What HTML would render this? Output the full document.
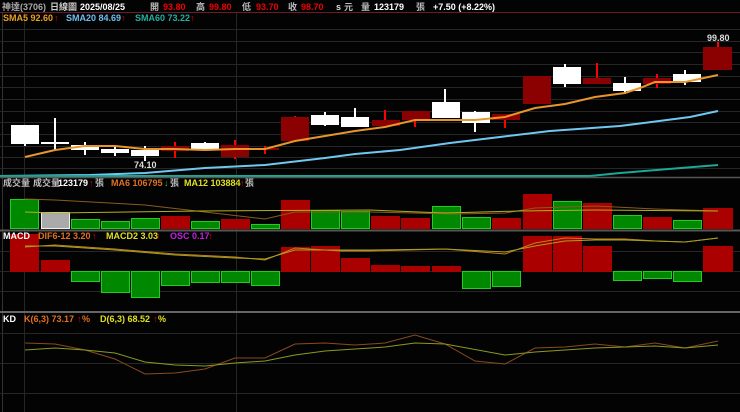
<!DOCTYPE html>
<html><head><meta charset="utf-8"><style>
html,body{margin:0;padding:0;background:#000;width:740px;height:412px;overflow:hidden}
svg{display:block}
text{font-family:"Liberation Sans","Noto Sans CJK TC",sans-serif;font-size:9px;font-weight:bold}
</style></head><body>
<svg width="740" height="412" xmlns="http://www.w3.org/2000/svg">
<rect width="740" height="412" fill="#030303"/>
<!-- header -->
<text x="2" y="10" fill="#aaa" font-size="8" font-weight="normal">神達(3706)</text>
<text x="50" y="10" fill="#ccc" font-size="9" font-weight="normal">日線圖</text>
<text x="80" y="10" fill="#fff" font-size="11">2025/08/25</text>
<text x="150" y="10" fill="#bbb" font-size="9" font-weight="normal">開</text><text x="163" y="10" fill="#e00" font-size="11">93.80</text>
<text x="196" y="10" fill="#bbb" font-size="9" font-weight="normal">高</text><text x="209" y="10" fill="#e00" font-size="11">99.80</text>
<text x="242" y="10" fill="#bbb" font-size="9" font-weight="normal">低</text><text x="256" y="10" fill="#e00" font-size="11">93.70</text>
<text x="288" y="10" fill="#bbb" font-size="9" font-weight="normal">收</text><text x="301" y="10" fill="#e00" font-size="11">98.70</text>
<text x="336" y="10" fill="#ddd" font-size="10">s</text><text x="344" y="10" fill="#bbb" font-size="9" font-weight="normal">元</text>
<text x="361" y="10" fill="#bbb" font-size="9" font-weight="normal">量</text><text x="374" y="10" fill="#fff" font-size="11">123179</text><text x="416" y="10" fill="#bbb" font-size="9" font-weight="normal">張</text>
<text x="433" y="10" fill="#fff" font-size="11">+7.50 (+8.22%)</text>
<line x1="0" y1="12.5" x2="740" y2="12.5" stroke="#6a1a2a" stroke-width="1"/>
<line x1="2.5" y1="13" x2="2.5" y2="412" stroke="#333"/>
<!-- main grid -->
<g stroke="#262626" stroke-width="1">
<line x1="0" y1="29.5" x2="740" y2="29.5"/><line x1="0" y1="41.5" x2="740" y2="41.5"/><line x1="0" y1="52.5" x2="740" y2="52.5"/><line x1="0" y1="64.5" x2="740" y2="64.5"/><line x1="0" y1="76.5" x2="740" y2="76.5"/><line x1="0" y1="87.5" x2="740" y2="87.5"/><line x1="0" y1="99.5" x2="740" y2="99.5"/><line x1="0" y1="111.5" x2="740" y2="111.5"/><line x1="0" y1="122.5" x2="740" y2="122.5"/><line x1="0" y1="134.5" x2="740" y2="134.5"/><line x1="0" y1="146.5" x2="740" y2="146.5"/><line x1="0" y1="157.5" x2="740" y2="157.5"/><line x1="0" y1="168.5" x2="740" y2="168.5"/>
<line x1="24.5" y1="13" x2="24.5" y2="412"/><line x1="236.5" y1="13" x2="236.5" y2="412"/>
<line x1="0" y1="271.5" x2="740" y2="271.5"/><line x1="0" y1="291.5" x2="740" y2="291.5"/><line x1="0" y1="251.5" x2="740" y2="251.5"/>
<line x1="0" y1="333.5" x2="740" y2="333.5"/><line x1="0" y1="363.5" x2="740" y2="363.5"/><line x1="0" y1="393.5" x2="740" y2="393.5"/>
</g>
<text x="3" y="21" fill="#e8a020" font-size="8.5">SMA5 92.60</text><text x="54" y="21" fill="#e00">↑</text>
<text x="66" y="21" fill="#6ac0f0" font-size="8.5">SMA20 84.69</text><text x="121" y="21" fill="#e00">↑</text>
<text x="135" y="21" fill="#20b0a0" font-size="8.5">SMA60 73.22</text><text x="190" y="21" fill="#e00">↑</text>
<!-- wicks -->
<g stroke-width="2">
<g stroke="#fff">
<line x1="25" y1="125" x2="25" y2="146"/><line x1="55" y1="118" x2="55" y2="150"/><line x1="85" y1="142" x2="85" y2="155"/><line x1="115" y1="147" x2="115" y2="156"/><line x1="145" y1="146" x2="145" y2="161"/><line x1="205" y1="142" x2="205" y2="150"/><line x1="325" y1="112" x2="325" y2="126"/><line x1="355" y1="108" x2="355" y2="127"/><line x1="445" y1="89" x2="445" y2="118"/><line x1="475" y1="111" x2="475" y2="132"/><line x1="565" y1="64" x2="565" y2="87"/><line x1="625" y1="77" x2="625" y2="94"/><line x1="685" y1="70" x2="685" y2="85"/>
</g>
<g stroke="#f00">
<line x1="175" y1="142" x2="175" y2="158"/><line x1="235" y1="140" x2="235" y2="159"/><line x1="265" y1="146" x2="265" y2="154"/><line x1="295" y1="116" x2="295" y2="120"/><line x1="385" y1="110" x2="385" y2="122"/><line x1="415" y1="115" x2="415" y2="127"/><line x1="505" y1="114" x2="505" y2="128"/><line x1="597" y1="63" x2="597" y2="80"/><line x1="657" y1="74" x2="657" y2="88"/><line x1="718" y1="42" x2="718" y2="50"/>
</g></g>
<!-- bodies -->
<g fill="#fff">
<rect x="11" y="125" width="28" height="19"/><rect x="41" y="142" width="28" height="2"/><rect x="71" y="145" width="28" height="5"/><rect x="101" y="149" width="28" height="4"/><rect x="131" y="150" width="28" height="6"/><rect x="191" y="143" width="28" height="6"/><rect x="311" y="115" width="28" height="10"/><rect x="341" y="117" width="28" height="10"/><rect x="432" y="102" width="28" height="16"/><rect x="462" y="112" width="28" height="11"/><rect x="553" y="67" width="28" height="17"/><rect x="613" y="83" width="28" height="8"/><rect x="673" y="74" width="28" height="8"/>
</g>
<g fill="#8b0000">
<rect x="161" y="146" width="28" height="5"/><rect x="221" y="145" width="28" height="12"/><rect x="261" y="148" width="18" height="2"/><rect x="281" y="117" width="28" height="24"/><rect x="372" y="120" width="28" height="6"/><rect x="402" y="111" width="28" height="9"/><rect x="492" y="114" width="28" height="6"/><rect x="523" y="76" width="28" height="28"/><rect x="583" y="78" width="28" height="6"/><rect x="643" y="78" width="28" height="6"/><rect x="703" y="47" width="29" height="23"/>
</g>
<text x="134" y="168" fill="#ddd" font-weight="normal">74.10</text>
<text x="707" y="41" fill="#ddd" font-weight="normal">99.80</text>
<!-- MAs -->
<polyline fill="none" stroke="#e8962a" stroke-width="2" points="25,157 55,150 85,146 115,146 145,149 175,149 205,150 235,149 265,149 295,141 325,136 355,131 385,127 415,120 445,120 475,120 505,117 535,108 565,104 595,97 625,93 640,88 655,82 685,82 718,75"/>
<polyline fill="none" stroke="#70c8f0" stroke-width="2" points="0,176 90,175 145,173 205,168 265,165 325,158 355,154 400,150 450,143 500,137 550,131 620,126 690,117 718,111"/>
<polyline fill="none" stroke="#1aa898" stroke-width="2" points="0,176 590,176 620,173 718,165"/>
<line x1="0" y1="177.5" x2="740" y2="177.5" stroke="#555" stroke-width="1.5"/>
<!-- volume -->
<text x="3" y="186" fill="#bbb" font-size="7" font-weight="normal">成交量</text>
<text x="33" y="186" fill="#bbb" font-size="7" font-weight="normal">成交量</text><text x="58" y="186" fill="#fff" font-size="8.5">123179</text><text x="89" y="186" fill="#e00">↑</text><text x="95" y="186" fill="#bbb" font-size="7" font-weight="normal">張</text>
<text x="111" y="186" fill="#e07020" font-size="8.5">MA6 106795</text><text x="164" y="186" fill="#2c2">↓</text><text x="170" y="186" fill="#bbb" font-size="7" font-weight="normal">張</text>
<text x="184" y="186" fill="#e0e020" font-size="8.5">MA12 103884</text><text x="240" y="186" fill="#e00">↑</text><text x="245" y="186" fill="#bbb" font-size="7" font-weight="normal">張</text>
<g stroke-width="1">
<rect x="10.5" y="199.5" width="28" height="29" fill="#080" stroke="#2c2"/>
<rect x="41.5" y="212.5" width="28" height="16" fill="#aaa" stroke="#eee"/>
<rect x="71.5" y="219.5" width="28" height="9" fill="#080" stroke="#2c2"/>
<rect x="101.5" y="221.5" width="28" height="7" fill="#080" stroke="#2c2"/>
<rect x="131.5" y="218.5" width="28" height="10" fill="#080" stroke="#2c2"/>
<rect x="161.5" y="216.5" width="28" height="12" fill="#a00" stroke="#a00"/>
<rect x="191.5" y="221.5" width="28" height="7" fill="#080" stroke="#2c2"/>
<rect x="221.5" y="219.5" width="28" height="9" fill="#a00" stroke="#a00"/>
<rect x="251.5" y="224.5" width="28" height="4" fill="#080" stroke="#2c2"/>
<rect x="281.5" y="200.5" width="28" height="28" fill="#a00" stroke="#a00"/>
<rect x="311.5" y="210.5" width="28" height="18" fill="#080" stroke="#2c2"/>
<rect x="341.5" y="211.5" width="28" height="17" fill="#080" stroke="#2c2"/>
<rect x="371.5" y="216.5" width="28" height="12" fill="#a00" stroke="#a00"/>
<rect x="401.5" y="218.5" width="28" height="10" fill="#a00" stroke="#a00"/>
<rect x="432.5" y="206.5" width="28" height="22" fill="#080" stroke="#2c2"/>
<rect x="462.5" y="217.5" width="28" height="11" fill="#080" stroke="#2c2"/>
<rect x="492.5" y="218.5" width="28" height="10" fill="#a00" stroke="#a00"/>
<rect x="523.5" y="194.5" width="28" height="34" fill="#a00" stroke="#a00"/>
<rect x="553.5" y="201.5" width="28" height="27" fill="#080" stroke="#2c2"/>
<rect x="583.5" y="203.5" width="28" height="25" fill="#a00" stroke="#a00"/>
<rect x="613.5" y="215.5" width="28" height="13" fill="#080" stroke="#2c2"/>
<rect x="643.5" y="217.5" width="28" height="11" fill="#a00" stroke="#a00"/>
<rect x="673.5" y="220.5" width="28" height="8" fill="#080" stroke="#2c2"/>
<rect x="703.5" y="208.5" width="29" height="20" fill="#a00" stroke="#a00"/>
</g>
<polyline fill="none" stroke="#8a5a20" stroke-width="1" points="25,199 55,200 145,205 205,212 265,219 295,212 370,212 455,214 505,213 535,208 595,206 655,209 718,211"/>
<polyline fill="none" stroke="#b0b020" stroke-width="1" points="25,212 55,213 200,211 370,210 445,213 520,211 595,210 718,211"/>
<line x1="0" y1="230.5" x2="740" y2="230.5" stroke="#555" stroke-width="2"/>
<!-- MACD -->
<g stroke-width="1">
<rect x="10.5" y="234.5" width="28" height="37" fill="#a00" stroke="#a00"/>
<rect x="41.5" y="260.5" width="28" height="11" fill="#a00" stroke="#a00"/>
<rect x="71.5" y="271.5" width="28" height="10" fill="#080" stroke="#2c2"/>
<rect x="101.5" y="271.5" width="28" height="21" fill="#080" stroke="#2c2"/>
<rect x="131.5" y="271.5" width="28" height="26" fill="#080" stroke="#2c2"/>
<rect x="161.5" y="271.5" width="28" height="14" fill="#080" stroke="#2c2"/>
<rect x="191.5" y="271.5" width="28" height="11" fill="#080" stroke="#2c2"/>
<rect x="221.5" y="271.5" width="28" height="11" fill="#080" stroke="#2c2"/>
<rect x="251.5" y="271.5" width="28" height="14" fill="#080" stroke="#2c2"/>
<rect x="281.5" y="247.5" width="28" height="24" fill="#a00" stroke="#a00"/>
<rect x="311.5" y="246.5" width="28" height="25" fill="#a00" stroke="#a00"/>
<rect x="341.5" y="258.5" width="28" height="13" fill="#a00" stroke="#a00"/>
<rect x="371.5" y="265.5" width="28" height="6" fill="#a00" stroke="#a00"/>
<rect x="401.5" y="266.5" width="28" height="5" fill="#a00" stroke="#a00"/>
<rect x="432.5" y="266.5" width="28" height="5" fill="#a00" stroke="#a00"/>
<rect x="462.5" y="271.5" width="28" height="17" fill="#080" stroke="#2c2"/>
<rect x="492.5" y="271.5" width="28" height="15" fill="#080" stroke="#2c2"/>
<rect x="523.5" y="236.5" width="28" height="35" fill="#a00" stroke="#a00"/>
<rect x="553.5" y="236.5" width="28" height="35" fill="#a00" stroke="#a00"/>
<rect x="583.5" y="246.5" width="28" height="25" fill="#a00" stroke="#a00"/>
<rect x="613.5" y="271.5" width="28" height="9" fill="#080" stroke="#2c2"/>
<rect x="643.5" y="271.5" width="28" height="7" fill="#080" stroke="#2c2"/>
<rect x="673.5" y="271.5" width="28" height="10" fill="#080" stroke="#2c2"/>
<rect x="703.5" y="246.5" width="29" height="25" fill="#a00" stroke="#a00"/>
</g>
<polyline fill="none" stroke="#c08020" stroke-width="1" points="25,247 55,245 115,249 175,254 235,257 265,260 295,248 340,251 370,251 445,249 505,254 535,243 565,238 595,239 625,239 655,241 685,242 718,238"/>
<polyline fill="none" stroke="#a8a020" stroke-width="1" points="25,246 55,246 115,250 175,255 235,258 265,259 295,250 340,250 370,250 445,249 505,252 535,246 565,241 595,240 625,240 655,241 685,242 718,238"/>
<text x="3" y="239" fill="#fff" font-size="8">MACD</text>
<text x="38" y="239" fill="#e07020" font-size="8.5">DIF6-12 3.20</text><text x="92" y="239" fill="#e00">↑</text>
<text x="106" y="239" fill="#e0e020" font-size="8.5">MACD2 3.03</text><text x="156" y="239" fill="#e00">↑</text>
<text x="170" y="239" fill="#c020e0" font-size="8.5">OSC 0.17</text><text x="208" y="239" fill="#e00">↑</text>
<line x1="0" y1="312" x2="740" y2="312" stroke="#666" stroke-width="2"/>
<!-- KD -->
<text x="3" y="322" fill="#fff" font-size="8">KD</text>
<text x="24" y="322" fill="#e07020" font-size="8.5">K(6,3) 73.17</text><text x="77" y="322" fill="#e00">↑</text><text x="82" y="322" fill="#e07020">%</text>
<text x="100" y="322" fill="#e0e020" font-size="8.5">D(6,3) 68.52</text><text x="153" y="322" fill="#e00">↑</text><text x="158" y="322" fill="#e0e020">%</text>
<polyline fill="none" stroke="#8a4a20" stroke-width="1" points="25,343 55,344 85,350 115,359 145,374 175,373 205,369 235,358 265,358 295,344 325,343 355,345 385,343 415,335 445,344 475,361 505,364 535,348 565,347 595,344 625,347 655,343 685,348 718,341"/>
<polyline fill="none" stroke="#8a9a20" stroke-width="1" points="25,350 55,348 85,350 115,353 145,362 175,365 205,366 235,363 265,361 295,355 325,351 355,349 385,347 415,343 445,344 505,355 535,352 595,348 655,346 685,348 718,345"/>
</svg>
</body></html>
